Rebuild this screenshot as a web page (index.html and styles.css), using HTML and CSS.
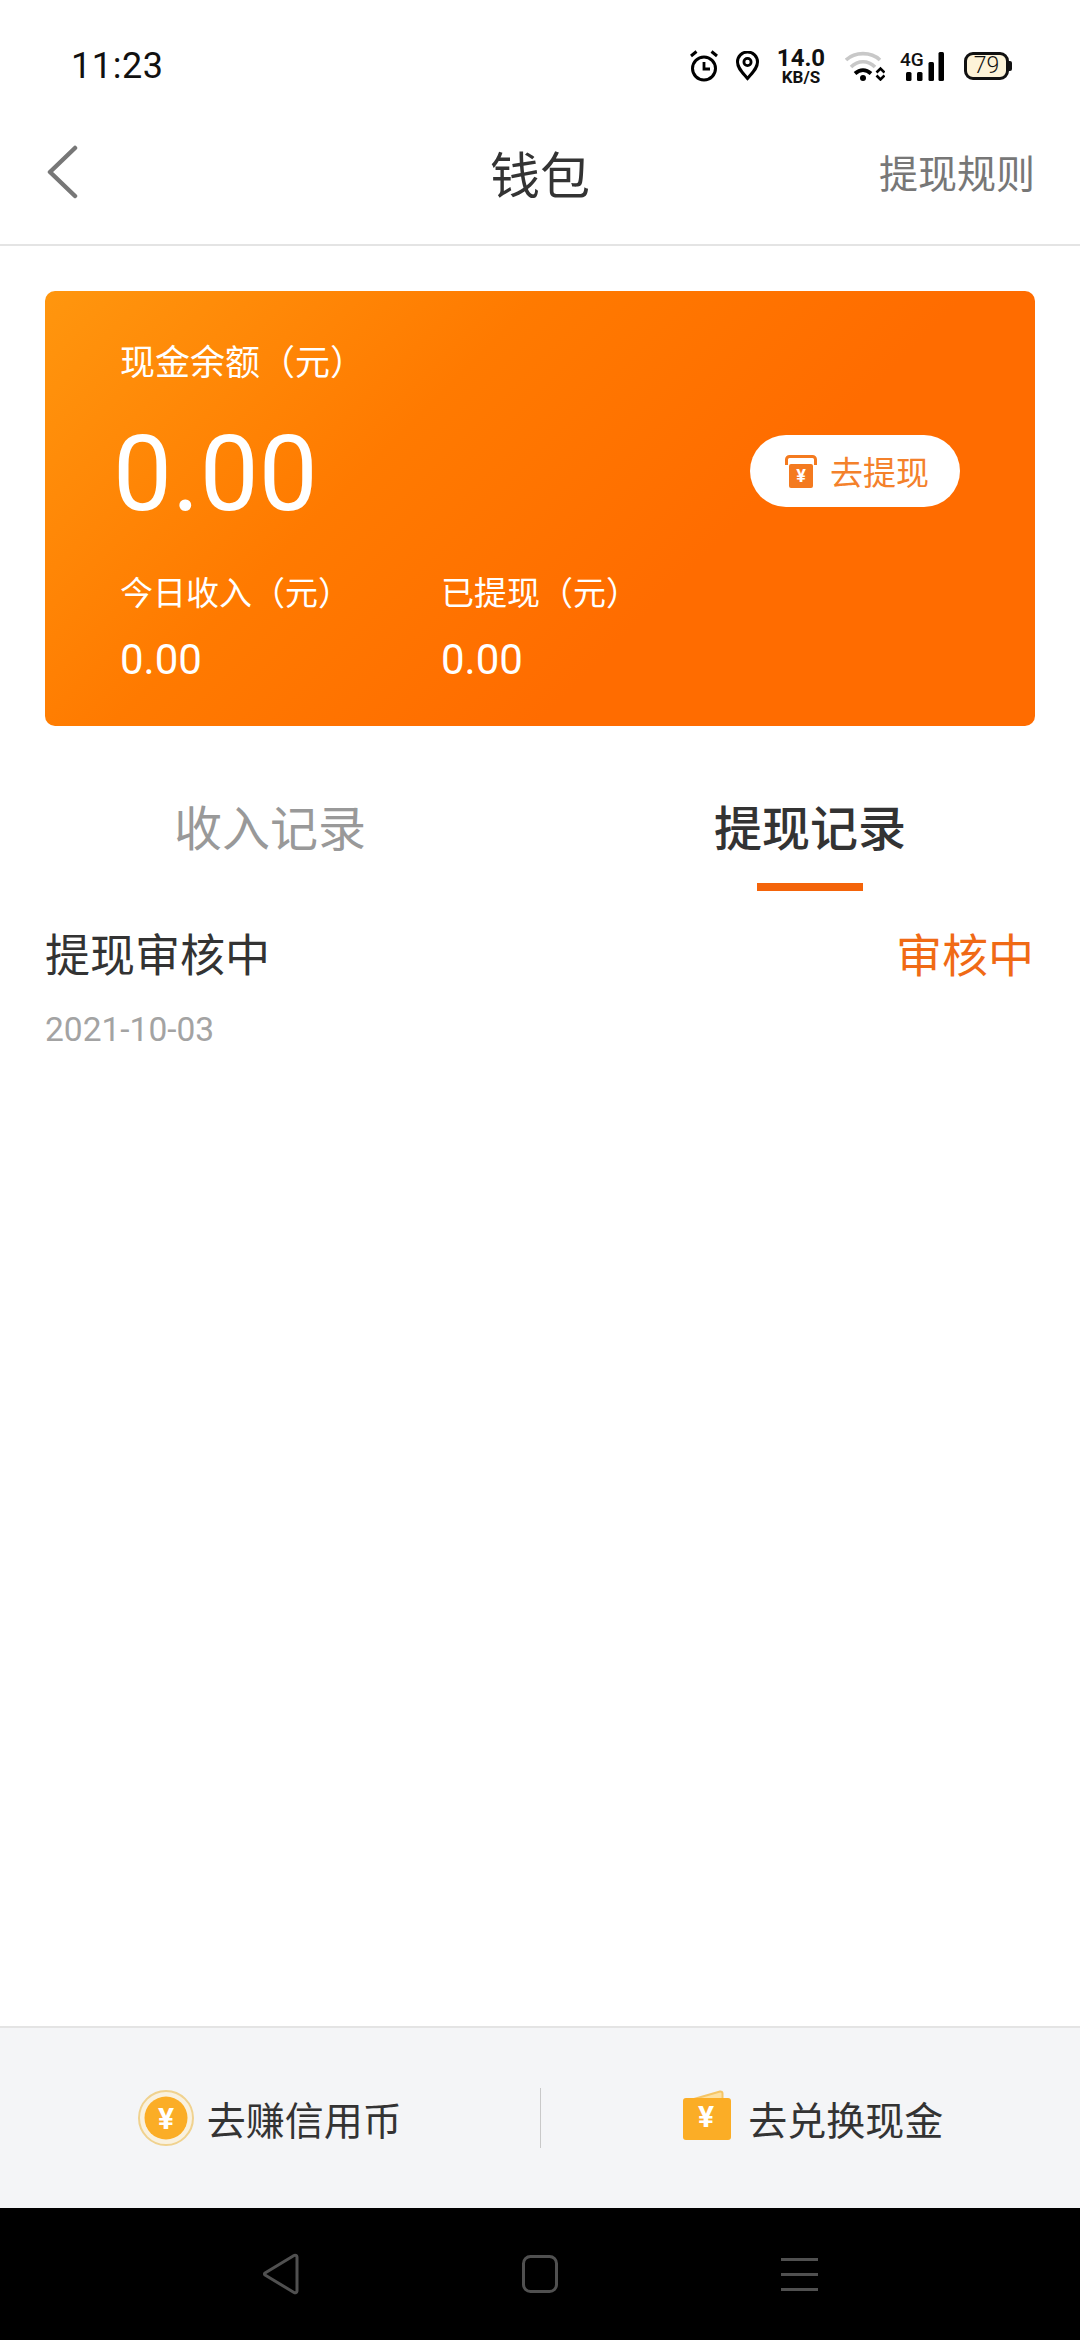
FILE: index.html
```html
<!DOCTYPE html>
<html lang="zh">
<head>
<meta charset="utf-8">
<title>钱包</title>
<link rel="stylesheet" href="styles.css">
</head>
<body>
<div class="app">
  <div class="status">
    <span class="time">11:23</span>
    <div class="status-icons">
      <svg width="28" height="32" viewBox="0 0 28 32"><circle cx="14" cy="18.500" r="11.500" fill="none" stroke="#000" stroke-width="3"/><path d="M14 12v7h6" fill="none" stroke="#000" stroke-width="2.800"/><path d="M1 6l5.500-4.500M27 6l-5.500-4.500" stroke="#000" stroke-width="3" fill="none"/></svg>
      <svg width="23" height="30" viewBox="0 0 23 30"><path d="M11.500 27.500C6 21 1.500 17 1.500 11a10 10 0 0 1 20 0c0 6-4.500 10-10 16.500z" fill="none" stroke="#000" stroke-width="3"/><circle cx="11.500" cy="11" r="3.600" fill="none" stroke="#000" stroke-width="2.800"/></svg>
      <div class="speed"><span class="speed-num">14.0</span><span class="speed-unit">KB/S</span></div>
      <svg class="ic-wifi" width="40" height="30" viewBox="0 0 40 30"><path d="M1 9C10 .5 26 .5 35 9" fill="none" stroke="#c8c8c8" stroke-width="3.600"/><path d="M6 16C13 9 23 9 30 16" fill="none" stroke="#c8c8c8" stroke-width="3.600"/><path d="M10 22.500C15 18 21 18 26 22.500" fill="none" stroke="#000" stroke-width="3.800"/><circle cx="18" cy="27" r="3" fill="#000"/><path d="M31.500 21.500l4-4 4 4M31.500 24.500l4 4 4-4" fill="none" stroke="#000" stroke-width="2.600"/></svg>
      <div class="signal">
        <span class="net">4G</span>
        <svg width="38" height="29" viewBox="0 0 38 29"><rect x="0" y="20" width="5.500" height="9" rx="1.500"/><rect x="11" y="20" width="5.500" height="9" rx="1.500"/><rect x="22.500" y="10" width="5.500" height="19" rx="1.500"/><rect x="32.500" y="0" width="5.500" height="29" rx="1.500"/></svg>
      </div>
      <div class="battery"><span class="battery-body">79</span><span class="battery-cap"></span></div>
    </div>
  </div>

  <header class="nav">
    <svg class="back" width="32" height="56" viewBox="0 0 32 56"><path d="M29 4L4 28l25 24" fill="none" stroke="#777" stroke-width="4.500" stroke-linecap="round" stroke-linejoin="round"/></svg>
    <h1 class="nav-title">钱包</h1>
    <span class="nav-link">提现规则</span>
  </header>

  <section class="card">
    <div class="card-label">现金余额（元）</div>
    <div class="card-main">
      <span class="balance">0.00</span>
      <button class="withdraw">
        <svg width="32" height="33" viewBox="0 0 32 33"><path d="M1.500 10V4.500a3 3 0 0 1 3-3h23a3 3 0 0 1 3 3V10" fill="none" stroke="#f47a1f" stroke-width="3"/><rect x="4" y="9" width="24" height="24" rx="2" fill="#f47a1f"/><text x="16" y="27" class="yen-small">¥</text></svg>
        <span>去提现</span>
      </button>
    </div>
    <div class="card-stats">
      <div class="stat">
        <div class="stat-label">今日收入（元）</div>
        <div class="stat-value">0.00</div>
      </div>
      <div class="stat">
        <div class="stat-label">已提现（元）</div>
        <div class="stat-value">0.00</div>
      </div>
    </div>
  </section>

  <nav class="tabs">
    <div class="tab">收入记录</div>
    <div class="tab tab-active">提现记录</div>
  </nav>

  <div class="record">
    <div class="record-row">
      <span class="record-title">提现审核中</span>
      <span class="record-state">审核中</span>
    </div>
    <div class="record-date">2021-10-03</div>
  </div>

  <div class="spacer"></div>

  <footer class="actions">
    <div class="action action-left">
      <svg width="56" height="56" viewBox="0 0 56 56"><circle cx="28" cy="28" r="27" fill="#f9f1df" stroke="#f0d28f" stroke-width="2"/><circle cx="28" cy="28" r="21.500" fill="#fbad26"/><text x="28" y="39" class="yen">¥</text></svg>
      <span>去赚信用币</span>
    </div>
    <div class="action-sep"></div>
    <div class="action action-right">
      <svg class="wallet" width="50" height="52" viewBox="0 0 50 52"><path d="M12 10L38 2.500a2 2 0 0 1 2.500 2V10" fill="#fde0a0" stroke="#f5c566" stroke-width="2"/><rect x="1" y="9" width="48" height="42" rx="3" fill="#fbad26"/><text x="24" y="38" class="yen">¥</text></svg>
      <span>去兑换现金</span>
    </div>
  </footer>

  <div class="sysnav">
    <svg width="36" height="42" viewBox="0 0 36 42"><path d="M31 2.500L2 20a1.200 1.200 0 0 0 0 2L31 39.500a2 2 0 0 0 3-1.500V4a2 2 0 0 0-3-1.500z" fill="none" stroke="#505050" stroke-width="3" stroke-linejoin="round"/></svg>
    <svg width="36" height="38" viewBox="0 0 36 38"><rect x="1.500" y="1.500" width="33" height="35" rx="7" fill="none" stroke="#505050" stroke-width="3"/></svg>
    <svg width="37" height="33" viewBox="0 0 37 33"><path d="M0 1.500h37M0 16.500h37M0 31.500h37" stroke="#505050" stroke-width="3" fill="none"/></svg>
  </div>
</div>
</body>
</html>
```
FILE: styles.css
```css
* { box-sizing: border-box; }
html, body { margin: 0; padding: 0; }
body {
  background: #fff;
  font-family: "Noto Sans CJK SC", "Noto Sans", sans-serif;
}
.app {
  width: 1080px;
  height: 2340px;
  display: flex;
  flex-direction: column;
  overflow: hidden;
}

/* status bar */
.status {
  height: 112px;
  flex: none;
  display: flex;
  align-items: center;
  justify-content: space-between;
  padding: 20px 68px 0 71px;
}
.time {
  font-family: Roboto, sans-serif;
  font-size: 36px;
  color: #111;
  letter-spacing: .6px;
}
.status-icons { display: flex; align-items: center; gap: 18px; }
.speed {
  display: flex;
  flex-direction: column;
  align-items: center;
  width: 48px;
  font-family: Roboto, sans-serif;
  font-weight: 700;
  color: #111;
  margin-right: 2px;
}
.speed-num { font-size: 24px; line-height: 22px; white-space: nowrap; }
.speed-unit { font-size: 17px; line-height: 17px; white-space: nowrap; }
.ic-wifi { margin-right: -3px; }
.signal { position: relative; width: 44px; height: 29px; margin-right: 2px; }
.signal svg { position: absolute; right: 0; top: 0; }
.net {
  position: absolute;
  left: 0;
  top: -2px;
  font-family: Roboto, sans-serif;
  font-size: 19px;
  font-weight: 500;
  color: #111;
  line-height: 20px;
}
.battery { display: flex; align-items: center; }
.battery-body {
  width: 45px;
  height: 28px;
  border: 3.500px solid #111;
  border-radius: 9px;
  background: #fdf3d8;
  font-family: Roboto, sans-serif;
  font-size: 23px;
  font-weight: 300;
  line-height: 21px;
  text-align: center;
  color: #111;
}
.battery-cap {
  width: 3px;
  height: 10px;
  background: #111;
  border-radius: 0 2px 2px 0;
}

/* navigation */
.nav {
  height: 134px;
  flex: none;
  display: flex;
  align-items: center;
  position: relative;
  padding: 0 47px 12px 46px;
  justify-content: space-between;
  border-bottom: 2px solid #e4e4e4;
}
.back { flex: none; }
.nav-title {
  position: absolute;
  left: 0;
  right: 0;
  margin: 0;
  text-align: center;
  font-size: 50px;
  font-weight: 400;
  color: #333;
  line-height: 60px;
}
.nav-link { font-size: 39px; color: #777; line-height: 50px; margin: 0 -2px 2px 0; }

/* balance card */
.card {
  flex: none;
  height: 435px;
  margin: 45px 45px 0;
  padding: 46px 75px 0;
  border-radius: 10px;
  background: linear-gradient(135deg, #ff960e 0%, #ff7a00 35%, #ff6c00 65%, #ff6c00 100%);
  color: #fff;
}
.card-label { font-size: 35px; line-height: 46px; }
.card-main {
  display: flex;
  align-items: center;
  justify-content: space-between;
  height: 120px;
  margin-top: 32px;
}
.balance {
  font-family: Roboto, sans-serif;
  font-size: 105px;
  line-height: 120px;
  margin-left: -7px;
}
.withdraw {
  width: 210px;
  height: 72px;
  border: 0;
  border-radius: 36px;
  background: #fff;
  display: flex;
  align-items: center;
  justify-content: center;
  gap: 13px;
  padding: 0 0 0 4px;
  margin-top: -8px;
  font-family: inherit;
  font-size: 33px;
  color: #f4812b;
}
.yen-small { font-family: Roboto, sans-serif; font-size: 18px; font-weight: 700; fill: #fff; text-anchor: middle; }
.card-stats { display: flex; margin-top: 33px; }
.stat { width: 321px; }
.stat-label { font-size: 33px; line-height: 46px; }
.stat-value { font-family: Roboto, sans-serif; font-size: 42px; line-height: 50px; margin-top: 21px; }

/* tabs */
.tabs {
  flex: none;
  display: flex;
  height: 192px;
  padding-top: 69px;
}
.tab {
  flex: 1;
  text-align: center;
  font-size: 48px;
  line-height: 60px;
  color: #999;
  position: relative;
}
.tab-active { color: #333; font-weight: 500; }
.tab-active::after {
  content: "";
  position: absolute;
  left: 50%;
  top: 88px;
  width: 106px;
  height: 8px;
  margin-left: -53px;
  background: #f4640a;
}

/* record */
.record { flex: none; padding: 1px 46px 0 45px; }
.record-row { display: flex; justify-content: space-between; align-items: center; height: 66px; }
.record-title { font-size: 45px; color: #333; }
.record-state { font-size: 46px; color: #f06a15; }
.record-date { font-family: Roboto, sans-serif; font-size: 33.500px; color: #a3a3a3; line-height: 40px; margin-top: 25px; }

.spacer { flex: 1; }

/* footer actions */
.actions {
  flex: none;
  height: 182px;
  display: flex;
  align-items: center;
  background: #f4f5f7;
  border-top: 2px solid #e4e4e4;
}
.action {
  flex: none;
  width: calc(50% - .5px);
  display: flex;
  align-items: center;
  justify-content: center;
  gap: 13px;
  font-size: 39px;
  color: #333;
}
.action-right { padding-left: 5px; gap: 16px; }
.wallet { margin-bottom: 6px; }
.action-sep { width: 1px; height: 60px; background: #c9c9c9; flex: none; }
.yen { font-family: Roboto, sans-serif; font-size: 30px; font-weight: 700; fill: #fff; text-anchor: middle; }

/* system nav */
.sysnav {
  flex: none;
  height: 132px;
  background: #000;
  display: flex;
  align-items: center;
  justify-content: center;
  gap: 223px;
}
```
